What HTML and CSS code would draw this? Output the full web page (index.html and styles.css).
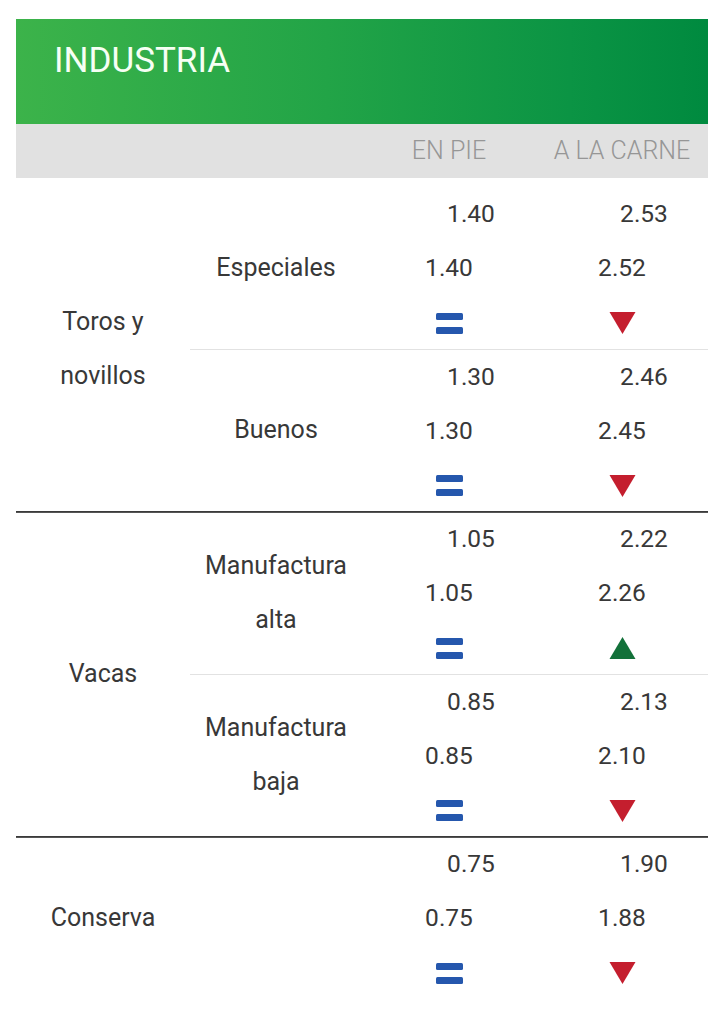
FILE: index.html
```html
<!DOCTYPE html>
<html lang="es">
<head>
<meta charset="utf-8">
<title>Industria</title>
<link rel="stylesheet" href="styles.css">
</head>
<body>
<div class="card">
  <div class="title">INDUSTRIA</div>
  <div class="colhead">
    <div></div><div></div>
    <div class="ch">EN PIE</div>
    <div class="ch">A LA CARNE</div>
  </div>
  <div class="body">

    <div class="group">
      <div class="glabel">Toros y<br>novillos</div>
      <div class="subs">
        <div class="sub">
          <div class="slabel">Especiales</div>
          <div class="num top">1.40</div><div class="num top">2.53</div>
          <div class="num">1.40</div><div class="num">2.52</div>
          <div class="ico"><span class="eq"><i></i><i></i></span></div>
          <div class="ico"><svg class="tri" viewBox="0 0 26 22"><polygon points="0,0 26,0 13,22" fill="#c41e2e"/></svg></div>
        </div>
        <div class="sub">
          <div class="slabel">Buenos</div>
          <div class="num top">1.30</div><div class="num top">2.46</div>
          <div class="num">1.30</div><div class="num">2.45</div>
          <div class="ico"><span class="eq"><i></i><i></i></span></div>
          <div class="ico"><svg class="tri" viewBox="0 0 26 22"><polygon points="0,0 26,0 13,22" fill="#c41e2e"/></svg></div>
        </div>
      </div>
    </div>

    <div class="group">
      <div class="glabel">Vacas</div>
      <div class="subs">
        <div class="sub">
          <div class="slabel">Manufactura<br>alta</div>
          <div class="num top">1.05</div><div class="num top">2.22</div>
          <div class="num">1.05</div><div class="num">2.26</div>
          <div class="ico"><span class="eq"><i></i><i></i></span></div>
          <div class="ico"><svg class="tri" viewBox="0 0 26 22"><polygon points="0,22 26,22 13,0" fill="#13713a"/></svg></div>
        </div>
        <div class="sub">
          <div class="slabel">Manufactura<br>baja</div>
          <div class="num top">0.85</div><div class="num top">2.13</div>
          <div class="num">0.85</div><div class="num">2.10</div>
          <div class="ico"><span class="eq"><i></i><i></i></span></div>
          <div class="ico"><svg class="tri" viewBox="0 0 26 22"><polygon points="0,0 26,0 13,22" fill="#c41e2e"/></svg></div>
        </div>
      </div>
    </div>

    <div class="group last">
      <div class="glabel">Conserva</div>
      <div class="subs">
        <div class="sub">
          <div class="slabel"></div>
          <div class="num top">0.75</div><div class="num top">1.90</div>
          <div class="num">0.75</div><div class="num">1.88</div>
          <div class="ico"><span class="eq"><i></i><i></i></span></div>
          <div class="ico"><svg class="tri" viewBox="0 0 26 22"><polygon points="0,0 26,0 13,22" fill="#c41e2e"/></svg></div>
        </div>
      </div>
    </div>

  </div>
</div>
</body>
</html>
```

FILE: styles.css
```css
html, body {
  margin: 0;
  padding: 0;
  background: #ffffff;
}

body {
  font-family: Roboto, "Liberation Sans", sans-serif;
  color: #383838;
}

.card {
  width: 692px;
  margin: 19px 0 0 16px;
}

.title {
  height: 105px;
  box-sizing: border-box;
  padding: 22px 0 0 38px;
  background: linear-gradient(90deg, #3cb34a 0%, #22a447 45%, #0b9444 80%, #008a3f 100%);
  color: #f6fff4;
  font-size: 35px;
  line-height: 40px;
  font-weight: 400;
}

.colhead {
  height: 54px;
  background: #e1e1e1;
  display: grid;
  grid-template-columns: 174px 172px 174px 172px;
  align-items: center;
}

.ch {
  text-align: center;
  font-size: 25px;
  font-weight: 300;
  color: #969696;
  line-height: 54px;
}

.body {
  padding-top: 9px;
}

.group {
  display: grid;
  grid-template-columns: 174px 518px;
  border-bottom: 1px solid #3a3a3a;
  box-shadow: 0 1px 0 #555555;
}

.group.last {
  border-bottom: none;
  box-shadow: none;
}

.glabel {
  display: flex;
  align-items: center;
  justify-content: center;
  text-align: center;
  font-size: 25px;
  line-height: 54px;
}

.sub {
  display: grid;
  grid-template-columns: 172px 174px 172px;
  grid-template-rows: 54px 54px 53.5px;
  border-bottom: 1px solid #e2e2e2;
}

.sub:last-child {
  border-bottom: none;
}

.slabel {
  grid-column: 1;
  grid-row: 1 / span 3;
  display: flex;
  align-items: center;
  justify-content: center;
  text-align: center;
  font-size: 25px;
  line-height: 54px;
}

.num {
  text-align: center;
  font-size: 24.5px;
  line-height: 54px;
}

.num.top {
  padding-left: 44px;
  box-sizing: border-box;
}

.ico {
  display: flex;
  align-items: center;
  justify-content: center;
  padding-top: 3px;
}

.eq {
  display: flex;
  flex-direction: column;
  gap: 7px;
  width: 27px;
}

.eq i {
  display: block;
  height: 7px;
  border-radius: 1.5px;
  background: #2557ad;
}

.tri {
  width: 27px;
  height: 22px;
  display: block;
}
```
